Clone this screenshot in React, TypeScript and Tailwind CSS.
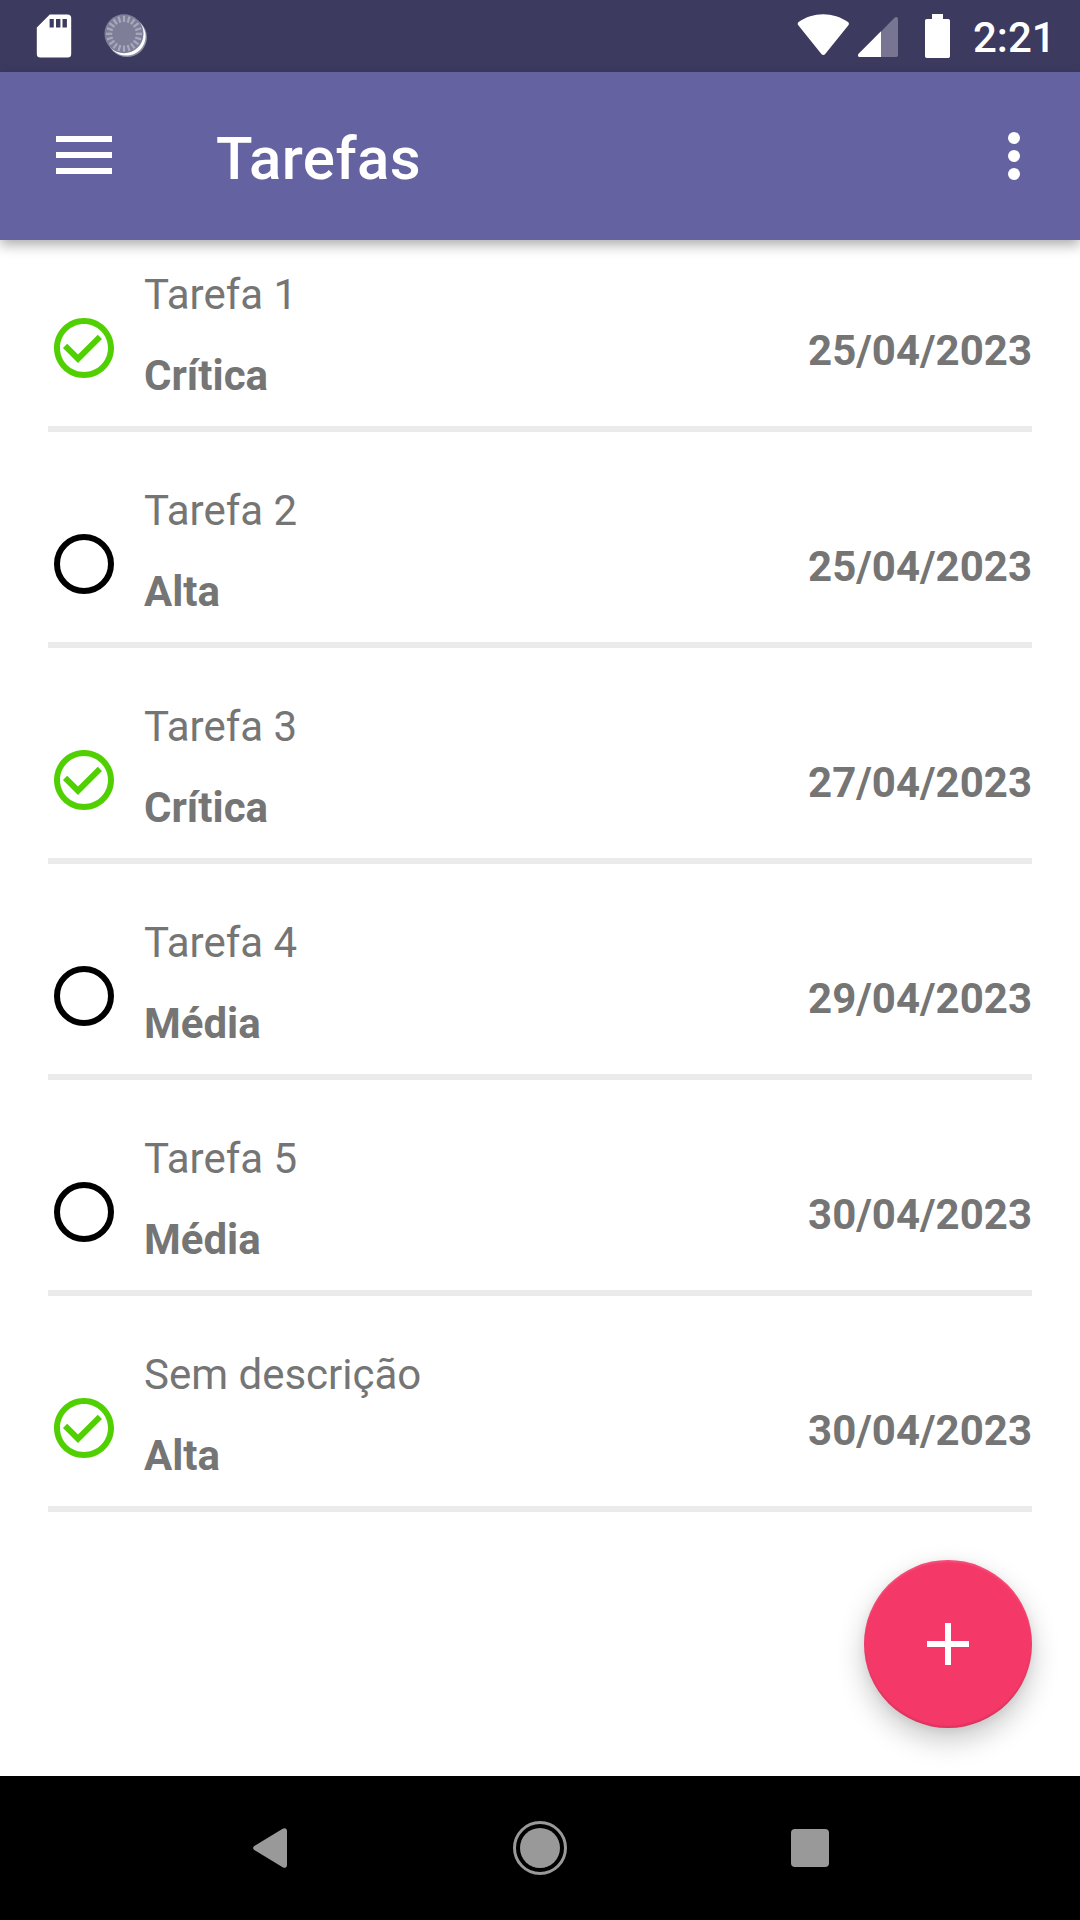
type Task = { title: string; priority: string; date: string; done: boolean };

const tasks: Task[] = [
  { title: "Tarefa 1", priority: "Crítica", date: "25/04/2023", done: true },
  { title: "Tarefa 2", priority: "Alta", date: "25/04/2023", done: false },
  { title: "Tarefa 3", priority: "Crítica", date: "27/04/2023", done: true },
  { title: "Tarefa 4", priority: "Média", date: "29/04/2023", done: false },
  { title: "Tarefa 5", priority: "Média", date: "30/04/2023", done: false },
  { title: "Sem descrição", priority: "Alta", date: "30/04/2023", done: true },
];

function SdCardIcon() {
  return (
    <svg width="36" height="44" viewBox="36 14 36 44">
      <path
        fill="#fff"
        fillRule="evenodd"
        d="M49.8 14.5H67.5a3.7 3.7 0 0 1 3.7 3.7V54a3.6 3.6 0 0 1-3.6 3.6H40.4A3.6 3.6 0 0 1 36.8 54V27.4ZM49.6 19v8.6h4.2V19Zm6.4 0v8.6h4.4V19Zm6.5 0v8.6h4.4V19Z"
      />
    </svg>
  );
}

function SyncIcon() {
  const ticks = Array.from({ length: 20 }, (_, i) => i * 18);
  return (
    <svg width="46" height="46" viewBox="103 12 46 46">
      <circle cx="127" cy="37.2" r="19.9" fill="#8f8ea8" />
      <circle cx="126.3" cy="36.3" r="19.3" fill="#fff" />
      <circle cx="124" cy="33.8" r="19.5" fill="#7f7e99" />
      {ticks.map((a) => (
        <path
          key={a}
          d="M124 15.8v6.2"
          stroke="#a9a8bb"
          strokeWidth="2.2"
          transform={`rotate(${a} 124 33.8)`}
        />
      ))}
    </svg>
  );
}

function WifiIcon() {
  return (
    <svg width="52" height="42" viewBox="797.2 14 52 42">
      <path
        fill="#fff"
        d="M798.5 25.2C797.6 24.1 797.7 22.9 798.8 22.1C806 16.9 814.5 14.2 823.4 14.2S840.8 16.9 848.2 22.1C849.3 22.9 849.4 24.1 848.6 25.2L825.6 53.8C824.4 55.4 822.6 55.4 821.4 53.8Z"
      />
    </svg>
  );
}

function SignalIcon() {
  return (
    <svg width="42" height="42" viewBox="857 16 42 42">
      <path
        fill="#777592"
        d="M881 31.5L894.8 17.6C896.2 16.3 898 17 898 18.9V55.2A1.8 1.8 0 0 1 896.2 57H881Z"
      />
      <path fill="#fff" d="M881 31.3V57H859.6C857.8 57 857.4 55 858.6 53.7Z" />
    </svg>
  );
}

function BatteryIcon() {
  return (
    <svg width="26" height="44" viewBox="925 14 26 44">
      <path
        fill="#fff"
        d="M932 14H943V19H948.3A1.7 1.7 0 0 1 950 20.7V56.3A1.7 1.7 0 0 1 948.3 58H926.7A1.7 1.7 0 0 1 925 56.3V20.7A1.7 1.7 0 0 1 926.7 19H932Z"
      />
    </svg>
  );
}

function StatusIcon({ done }: { done: boolean }) {
  return (
    <svg width="72" height="72" viewBox="0 0 24 24" className="mt-[72px] shrink-0">
      {done ? (
        <g fill="#50d000">
          <path d="M12 2C6.48 2 2 6.48 2 12s4.48 10 10 10 10-4.48 10-10S17.52 2 12 2zm0 18c-4.41 0-8-3.59-8-8s3.59-8 8-8 8 3.59 8 8-3.59 8-8 8z" />
          <path d="M16.59 7.58L10 14.17l-3.59-3.58L5 12l5 5 8-8z" />
        </g>
      ) : (
        <circle cx="12" cy="12" r="9" fill="none" stroke="#000" strokeWidth="2" />
      )}
    </svg>
  );
}

function TaskRow({ task }: { task: Task }) {
  return (
    <li className="flex h-[192px] items-start border-b-[6px] border-[#ebebeb] text-[42px] leading-[49px] text-[#757575]">
      <StatusIcon done={task.done} />
      <div className="ml-6 mt-[30px] flex grow flex-col gap-8">
        <span>{task.title}</span>
        <span className="font-bold">{task.priority}</span>
      </div>
      <span className="mt-[86px] font-bold">{task.date}</span>
    </li>
  );
}

export default function App() {
  return (
    <div className="flex h-[1920px] w-[1080px] flex-col overflow-hidden bg-white font-['Roboto',sans-serif]">
      <div className="flex h-[72px] shrink-0 items-start bg-[#3c3a5f] pl-9 pr-[30px] pt-[14px]">
        <SdCardIcon />
        <div className="-mt-0.5 ml-[31px]">
          <SyncIcon />
        </div>
        <div className="ml-auto flex items-start">
          <WifiIcon />
          <div className="ml-2 mt-0.5">
            <SignalIcon />
          </div>
          <div className="ml-[26px]">
            <BatteryIcon />
          </div>
          <span className="-mt-px ml-[22px] w-[77px] whitespace-nowrap text-[42px] font-medium leading-[49px] text-white">
            2:21
          </span>
        </div>
      </div>

      <header className="relative z-10 flex h-[168px] shrink-0 items-start bg-[#6562a2] pl-14 pr-[60px] text-white shadow-[0_5px_12px_rgba(0,0,0,0.32)]">
        <button className="mt-16 flex w-14 flex-col gap-2.5" aria-label="Menu">
          <span className="h-1.5 w-full bg-white" />
          <span className="h-1.5 w-full bg-white" />
          <span className="h-1.5 w-full bg-white" />
        </button>
        <h1 className="ml-[104px] mt-[52px] text-[60px] font-medium leading-[70px] tracking-[0.4px]">Tarefas</h1>
        <button className="ml-auto mt-[60px] flex flex-col gap-1.5" aria-label="Mais opções">
          <span className="size-3 rounded-full bg-white" />
          <span className="size-3 rounded-full bg-white" />
          <span className="size-3 rounded-full bg-white" />
        </button>
      </header>

      <main className="flex grow flex-col px-12">
        <ul className="flex flex-col gap-6">
          {tasks.map((task) => (
            <TaskRow key={task.title} task={task} />
          ))}
        </ul>
        <button
          aria-label="Adicionar"
          className="mb-12 ml-auto mt-auto flex size-[168px] items-center justify-center rounded-full bg-[#f43868] shadow-[0_12px_28px_rgba(0,0,0,0.22),0_2px_8px_rgba(0,0,0,0.06),inset_0_-2px_2px_rgba(0,0,0,0.1),inset_0_2px_2px_rgba(255,255,255,0.12)]"
        >
          <svg width="42" height="42" viewBox="0 0 42 42">
            <path d="M21 0v42M0 21h42" stroke="#fff" strokeWidth="6" />
          </svg>
        </button>
      </main>

      <nav className="flex h-36 shrink-0 items-center bg-black pl-[252px] pr-[251px]">
        <svg width="36" height="42" viewBox="252 1827 36 42">
          <path
            fill="#999"
            d="M254.3 1846L282.7 1828.7C285 1827.4 287 1828.6 287 1831V1865C287 1867.4 285 1868.6 282.7 1867.3L254.3 1850C252.6 1849 252.6 1847 254.3 1846Z"
          />
        </svg>
        <div className="ml-[225px] flex size-[54px] items-center justify-center rounded-full border-[3px] border-[#999]">
          <span className="size-10 rounded-full bg-[#999]" />
        </div>
        <span className="ml-auto size-[38px] rounded bg-[#999]" />
      </nav>
    </div>
  );
}
